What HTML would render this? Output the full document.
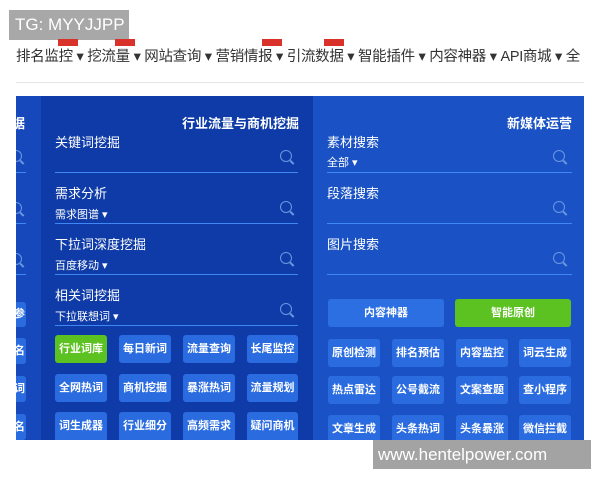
<!DOCTYPE html>
<html><head><meta charset="utf-8"><style>
*{margin:0;padding:0;box-sizing:border-box}
body{width:600px;height:480px;background:#fff;position:relative;overflow:hidden;font-family:"Liberation Sans","Noto Sans CJK SC",sans-serif}
.a{position:absolute;white-space:nowrap}
.tg{left:9px;top:10px;width:120px;height:30px;background:#a8a8a8;color:#fff;font-size:17px;line-height:30px;padding-left:6px}
.nav{left:16px;top:45px;font-size:14.5px;color:#333;letter-spacing:-0.3px}
.new{position:absolute;height:7px;width:20px;background:#d8322a;top:39px}
.w{color:#fff}
.lbl{font-size:13px;color:#fff}
.sub{font-size:11px;color:#fff}
.ln{height:1px;background:#3f87f2}
.btn{position:absolute;background:#2a6ce0;color:#fff;font-size:11px;font-weight:bold;text-align:center;border-radius:3px}
.g{background:#5cc221}
.srch{position:absolute;width:12px;height:12px;border:1.5px solid #6a98e2;border-radius:50%}
.srch:after{content:"";position:absolute;width:1.5px;height:5px;background:#6a98e2;left:10px;top:8.5px;transform:rotate(-45deg)}
.clip{position:absolute;left:16px;top:96px;width:25px;height:344px;background:#1648bb;overflow:hidden}
.clip .btn,.clip .srch,.clip .ln,.clip .a{position:absolute}
</style></head><body>
<div class="a tg">TG: MYYJJPP</div>
<div class="new" style="left:58px"></div><div class="new" style="left:115px"></div><div class="new" style="left:262px"></div><div class="new" style="left:324px"></div>
<div class="a nav">排名监控 ▾ 挖流量 ▾ 网站查询 ▾ 营销情报 ▾ 引流数据 ▾ 智能插件 ▾ 内容神器 ▾ API商城 ▾ 全</div>
<div class="a" style="left:16px;top:82px;width:568px;height:1px;background:#e6e6e6"></div>

<div class="clip">
<div class="a w" style="left:-4px;top:17px;font-size:13px;font-weight:bold">据</div>
<div class="srch" style="left:-6px;top:54px"></div><div class="ln" style="left:0;top:76px;width:10px"></div>
<div class="srch" style="left:-6px;top:106px"></div><div class="ln" style="left:0;top:127px;width:10px"></div>
<div class="srch" style="left:-6px;top:157px"></div><div class="ln" style="left:0;top:178px;width:10px"></div>
<div class="btn" style="left:-20px;top:206px;width:30px;height:25px;line-height:25px;text-align:right;padding-right:1px">参</div>
<div class="btn" style="left:-20px;top:242px;width:30px;height:26px;line-height:26px;text-align:right;padding-right:1px">名</div>
<div class="btn" style="left:-20px;top:280px;width:30px;height:26px;line-height:26px;text-align:right;padding-right:1px">词</div>
<div class="btn" style="left:-20px;top:318px;width:30px;height:26px;line-height:26px;text-align:right;padding-right:1px">名</div>
</div>
<div class="a" style="left:41px;top:96px;width:272px;height:344px;background:#0e3ba7"></div>
<div class="a" style="left:313px;top:96px;width:271px;height:344px;background:#1a52c6"></div>

<!-- middle -->
<div class="a w" style="right:301px;top:113px;font-size:13px;font-weight:bold">行业流量与商机挖掘</div>
<div class="a lbl" style="left:55px;top:132px">关键词挖掘</div>
<div class="srch" style="left:280px;top:150px"></div>
<div class="a ln" style="left:55px;top:172px;width:243px"></div>
<div class="a lbl" style="left:55px;top:183px">需求分析</div>
<div class="a sub" style="left:55px;top:206px">需求图谱 ▾</div>
<div class="srch" style="left:280px;top:201px"></div>
<div class="a ln" style="left:55px;top:223px;width:243px"></div>
<div class="a lbl" style="left:55px;top:234px">下拉词深度挖掘</div>
<div class="a sub" style="left:55px;top:257px">百度移动 ▾</div>
<div class="srch" style="left:280px;top:252px"></div>
<div class="a ln" style="left:55px;top:274px;width:243px"></div>
<div class="a lbl" style="left:55px;top:285px">相关词挖掘</div>
<div class="a sub" style="left:55px;top:308px">下拉联想词 ▾</div>
<div class="srch" style="left:280px;top:303px"></div>
<div class="a ln" style="left:55px;top:325px;width:243px"></div>

<div class="btn g" style="left:55px;top:335px;width:52px;height:28px;line-height:28px">行业词库</div>
<div class="btn" style="left:119px;top:335px;width:52px;height:28px;line-height:28px">每日新词</div>
<div class="btn" style="left:183px;top:335px;width:52px;height:28px;line-height:28px">流量查询</div>
<div class="btn" style="left:247px;top:335px;width:51px;height:28px;line-height:28px">长尾监控</div>
<div class="btn" style="left:55px;top:374px;width:52px;height:28px;line-height:28px">全网热词</div>
<div class="btn" style="left:119px;top:374px;width:52px;height:28px;line-height:28px">商机挖掘</div>
<div class="btn" style="left:183px;top:374px;width:52px;height:28px;line-height:28px">暴涨热词</div>
<div class="btn" style="left:247px;top:374px;width:51px;height:28px;line-height:28px">流量规划</div>
<div class="btn" style="left:55px;top:412px;width:52px;height:28px;line-height:28px;border-radius:3px 3px 0 0">词生成器</div>
<div class="btn" style="left:119px;top:412px;width:52px;height:28px;line-height:28px;border-radius:3px 3px 0 0">行业细分</div>
<div class="btn" style="left:183px;top:412px;width:52px;height:28px;line-height:28px;border-radius:3px 3px 0 0">高频需求</div>
<div class="btn" style="left:247px;top:412px;width:51px;height:28px;line-height:28px;border-radius:3px 3px 0 0">疑问商机</div>

<!-- right -->
<div class="a w" style="right:28px;top:113px;font-size:13px;font-weight:bold">新媒体运营</div>
<div class="a lbl" style="left:327px;top:132px">素材搜索</div>
<div class="a sub" style="left:327px;top:154px">全部 ▾</div>
<div class="srch" style="left:553px;top:150px"></div>
<div class="a ln" style="left:327px;top:172px;width:245px"></div>
<div class="a lbl" style="left:327px;top:183px">段落搜索</div>
<div class="srch" style="left:553px;top:201px"></div>
<div class="a ln" style="left:327px;top:223px;width:245px"></div>
<div class="a lbl" style="left:327px;top:234px">图片搜索</div>
<div class="srch" style="left:553px;top:252px"></div>
<div class="a ln" style="left:327px;top:274px;width:245px"></div>

<div class="btn" style="left:328px;top:299px;width:116px;height:28px;line-height:28px;background:#2c6fe2">内容神器</div>
<div class="btn g" style="left:455px;top:299px;width:116px;height:28px;line-height:28px">智能原创</div>

<div class="btn" style="left:328px;top:339px;width:52px;height:28px;line-height:28px">原创检测</div>
<div class="btn" style="left:392px;top:339px;width:52px;height:28px;line-height:28px">排名预估</div>
<div class="btn" style="left:456px;top:339px;width:52px;height:28px;line-height:28px">内容监控</div>
<div class="btn" style="left:519px;top:339px;width:52px;height:28px;line-height:28px">词云生成</div>
<div class="btn" style="left:328px;top:376px;width:52px;height:28px;line-height:28px">热点雷达</div>
<div class="btn" style="left:392px;top:376px;width:52px;height:28px;line-height:28px">公号截流</div>
<div class="btn" style="left:456px;top:376px;width:52px;height:28px;line-height:28px">文案查题</div>
<div class="btn" style="left:519px;top:376px;width:52px;height:28px;line-height:28px">查小程序</div>
<div class="btn" style="left:328px;top:415px;width:52px;height:25px;line-height:28px;border-radius:3px 3px 0 0">文章生成</div>
<div class="btn" style="left:392px;top:415px;width:52px;height:25px;line-height:28px;border-radius:3px 3px 0 0">头条热词</div>
<div class="btn" style="left:456px;top:415px;width:52px;height:25px;line-height:28px;border-radius:3px 3px 0 0">头条暴涨</div>
<div class="btn" style="left:519px;top:415px;width:52px;height:25px;line-height:28px;border-radius:3px 3px 0 0">微信拦截</div>

<div class="a" style="left:373px;top:440px;width:218px;height:29px;background:#a3a3a3;color:#fff;font-size:17px;line-height:29px;padding-left:5px">www.hentelpower.com</div>
</body></html>
